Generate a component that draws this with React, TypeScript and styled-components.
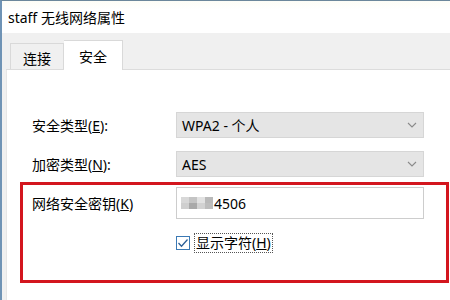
import React from "react";
import styled, { createGlobalStyle } from "styled-components";

const GlobalStyle = createGlobalStyle`
	html, body {
		margin: 0;
		padding: 0;
		background: #ffffff;
	}
	body {
		font-family: "Noto Sans", "Noto Sans CJK SC", sans-serif;
		color: #000;
	}
`;

const Row = ({ label, hotkey, suffix, children }: { label: string; hotkey: string; suffix?: string; children: any }) => {
	return (
		<FormRow>
			<Label>
				{label}(<u>{hotkey}</u>){suffix}
			</Label>
			{children}
		</FormRow>
	);
};

const Chevron = () => (
	<svg width="10" height="6" viewBox="0 0 10 6">
		<path d="M1 1 L5 5 L9 1" fill="none" stroke="#8a8a8a" strokeWidth="1.1" />
	</svg>
);

const mosaic = ["#d8d8d8", "#c4c4c4", "#e2e2e2", "#b9b9b9", "#cfcfcf", "#a9a9a9", "#d2d2d2", "#bdbdbd"];

const App = () => {
	return (
		<>
			<GlobalStyle />
			<Window>
				<TitleBar>staff 无线网络属性</TitleBar>
				<Body>
					<TabStrip>
						<Tab>连接</Tab>
						<Tab active>安全</Tab>
					</TabStrip>
					<Panel>
						<Row label="安全类型" hotkey="E" suffix=":">
							<Select>
								<span>WPA2 - 个人</span>
								<Chevron />
							</Select>
						</Row>
						<Row label="加密类型" hotkey="N" suffix=":">
							<Select>
								<span>AES</span>
								<Chevron />
							</Select>
						</Row>
						<Highlight>
							<Row label="网络安全密钥" hotkey="K">
								<Input>
									<Mosaic>
										{mosaic.map((c, i) => (
											<Cell key={i} style={{ background: c }} />
										))}
									</Mosaic>
									4506
								</Input>
							</Row>
							<CheckRow>
								<CheckBox>
									<svg width="12" height="12" viewBox="0 0 12 12">
										<path d="M1.5 6 L4.5 9.2 L10.5 2.5" fill="none" stroke="#2b5f96" strokeWidth="1.3" />
									</svg>
								</CheckBox>
								<CheckLabel>
									显示字符(<u>H</u>)
								</CheckLabel>
							</CheckRow>
						</Highlight>
					</Panel>
				</Body>
			</Window>
		</>
	);
};

export default App;

const Window = styled.div`
	width: 450px;
	height: 300px;
	box-sizing: border-box;
	border-top: 1px solid #6c879b;
	border-left: 2px solid #6f93b5;
	display: flex;
	flex-direction: column;
	overflow: hidden;
`;

const TitleBar = styled.div`
	height: 32px;
	flex: none;
	display: flex;
	align-items: center;
	padding-left: 6px;
	font-size: 14px;
	background: linear-gradient(#fdfdf6, #ffffff 30%);
`;

const Body = styled.div`
	flex: 1;
	display: flex;
	flex-direction: column;
	background: #f0f0f0;
	padding-left: 4px;
`;

const TabStrip = styled.div`
	height: 36px;
	flex: none;
	display: flex;
	align-items: flex-end;
	padding-left: 4px;
	border-bottom: 1px solid #dcdcdc;
	position: relative;
	z-index: 1;
`;

const Tab = styled.div<{ active?: boolean }>`
	box-sizing: border-box;
	height: ${(p) => (p.active ? "30px" : "26px")};
	width: ${(p) => (p.active ? "59px" : "54px")};
	margin-bottom: ${(p) => (p.active ? "-1px" : "0")};
	background: ${(p) => (p.active ? "#ffffff" : "#f0f0f0")};
	border: 1px solid #d9d9d9;
	border-bottom: none;
	border-left: ${(p) => (p.active ? "none" : "1px solid #d9d9d9")};
	font-size: 14px;
	display: flex;
	align-items: center;
	justify-content: center;
	padding-top: ${(p) => (p.active ? "0" : "2px")};
`;

const Panel = styled.div`
	flex: 1;
	background: #ffffff;
	border-left: 1px solid #e6e6e6;
	display: flex;
	flex-direction: column;
	gap: 13px;
	padding: 42px 1px 0 13px;
`;

const FormRow = styled.div`
	display: grid;
	grid-template-columns: 144px 248px;
	align-items: center;
	padding-left: 12px;
`;

const Label = styled.div`
	font-size: 14px;
	white-space: nowrap;
`;

const Select = styled.div`
	height: 26px;
	box-sizing: border-box;
	background: #e5e5e5;
	border: 1px solid #d6d6d6;
	display: flex;
	align-items: center;
	justify-content: space-between;
	padding: 0 6px 0 5px;
	font-size: 14px;
`;

const Highlight = styled.div`
	margin-top: -8px;
	border: 3px solid #d3161e;
	padding: 2px 0 29px 0;
	display: flex;
	flex-direction: column;
	gap: 16px;
	& > div:first-child {
		padding-left: 9px;
	}
`;

const Input = styled.div`
	height: 32px;
	box-sizing: border-box;
	border: 1px solid #cdcdcd;
	background: #ffffff;
	display: flex;
	align-items: center;
	padding-left: 4px;
	font-size: 14px;
`;

const Mosaic = styled.div`
	display: grid;
	grid-template-columns: repeat(4, 8px);
	grid-template-rows: repeat(2, 6px);
	margin-right: 1px;
	filter: blur(0.6px);
`;

const Cell = styled.span`
	display: block;
`;

const CheckRow = styled.div`
	display: flex;
	align-items: center;
	gap: 4px;
	padding-left: 153px;
	height: 16px;
`;

const CheckBox = styled.div`
	width: 14px;
	height: 14px;
	box-sizing: border-box;
	border: 1px solid #3b79b4;
	background: #ffffff;
	display: flex;
	align-items: center;
	justify-content: center;
`;

const CheckLabel = styled.div`
	font-size: 14px;
	border: 1px dotted #555;
	padding: 0 1px;
	line-height: 18px;
`;
